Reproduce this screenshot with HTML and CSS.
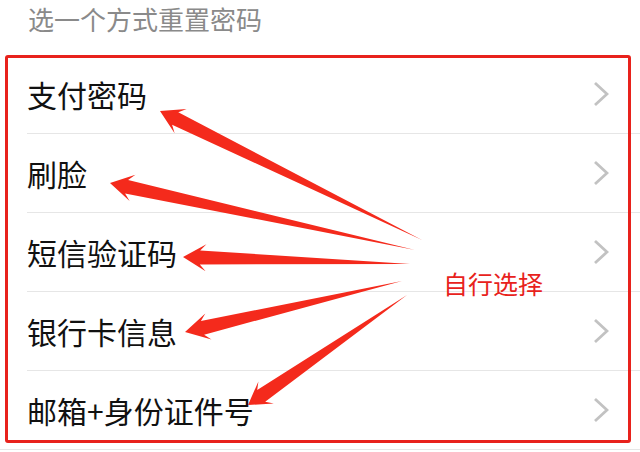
FILE: index.html
```html
<!DOCTYPE html>
<html lang="zh-CN">
<head>
<meta charset="utf-8">
<title>选一个方式重置密码</title>
<link rel="stylesheet" href="styles.css">
</head>
<body>
<div class="page">
  <div class="header">选一个方式重置密码</div>
  <ul class="list">
    <li class="row"><span class="label">支付密码</span><svg class="chev" viewBox="0 0 16 26"><polyline points="2,2 14,13 2,24"/></svg></li>
    <li class="row"><span class="label">刷脸</span><svg class="chev" viewBox="0 0 16 26"><polyline points="2,2 14,13 2,24"/></svg></li>
    <li class="row"><span class="label">短信验证码</span><svg class="chev" viewBox="0 0 16 26"><polyline points="2,2 14,13 2,24"/></svg></li>
    <li class="row"><span class="label">银行卡信息</span><svg class="chev" viewBox="0 0 16 26"><polyline points="2,2 14,13 2,24"/></svg></li>
    <li class="row last"><span class="label">邮箱+身份证件号</span><svg class="chev" viewBox="0 0 16 26"><polyline points="2,2 14,13 2,24"/></svg></li>
  </ul>
  <div class="frame"></div>
  <svg class="arrows" viewBox="0 0 640 452">
    <polygon points="160,111 174.6,133.3 172.1,124.8 422,240 178.3,112.2 186.6,109.1"/>
    <polygon points="110,183 129.6,201.1 125.1,193.5 415,250 128.1,179.9 135.4,174.7"/>
    <polygon points="183,257 205.6,271.2 199.8,264.5 410,264 200.2,250.5 206.4,244.2"/>
    <polygon points="185,332 211.5,339.6 204.1,334.7 402,281 200.9,321.1 205.3,313.4"/>
    <polygon points="248,405 273.8,403.6 265.2,401.7 407,295 257.2,390.1 258.4,381.4"/>
  </svg>
  <div class="note">自行选择</div>
</div>
</body>
</html>
```
FILE: styles.css
```css
html, body {
  margin: 0;
  padding: 0;
  background: #ffffff;
}
.page {
  position: relative;
  width: 640px;
  height: 452px;
  overflow: hidden;
  font-family: "Noto Sans CJK SC", "Noto Sans", sans-serif;
  background: #ffffff;
}
.header {
  height: 55px;
  box-sizing: border-box;
  padding: 3px 0 0 28px;
  font-size: 26px;
  line-height: 32px;
  color: #8a8a8a;
}
.list {
  list-style: none;
  margin: 0;
  padding: 0;
}
.row {
  height: 78px;
  margin-left: 27px;
  border-bottom: 1px solid #e6e6e6;
  display: flex;
  align-items: center;
  justify-content: space-between;
  padding-right: 31px;
}
.row.last {
  margin-left: 0;
  padding-left: 27px;
}
.label {
  font-size: 30px;
  line-height: 1;
  color: #111111;
}
.chev {
  width: 16px;
  height: 26px;
  fill: none;
  stroke: #c2c2c2;
  stroke-width: 2.8;
}
.frame {
  position: absolute;
  left: 5px;
  top: 55px;
  width: 626px;
  height: 388px;
  box-sizing: border-box;
  border: 3px solid #e8221c;
  border-radius: 3px;
}
.arrows {
  position: absolute;
  left: 0;
  top: 0;
  width: 640px;
  height: 452px;
  fill: #f42a1c;
}
.note {
  position: absolute;
  left: 443px;
  top: 269px;
  font-size: 25px;
  line-height: 28px;
  color: #e8221c;
}
```
